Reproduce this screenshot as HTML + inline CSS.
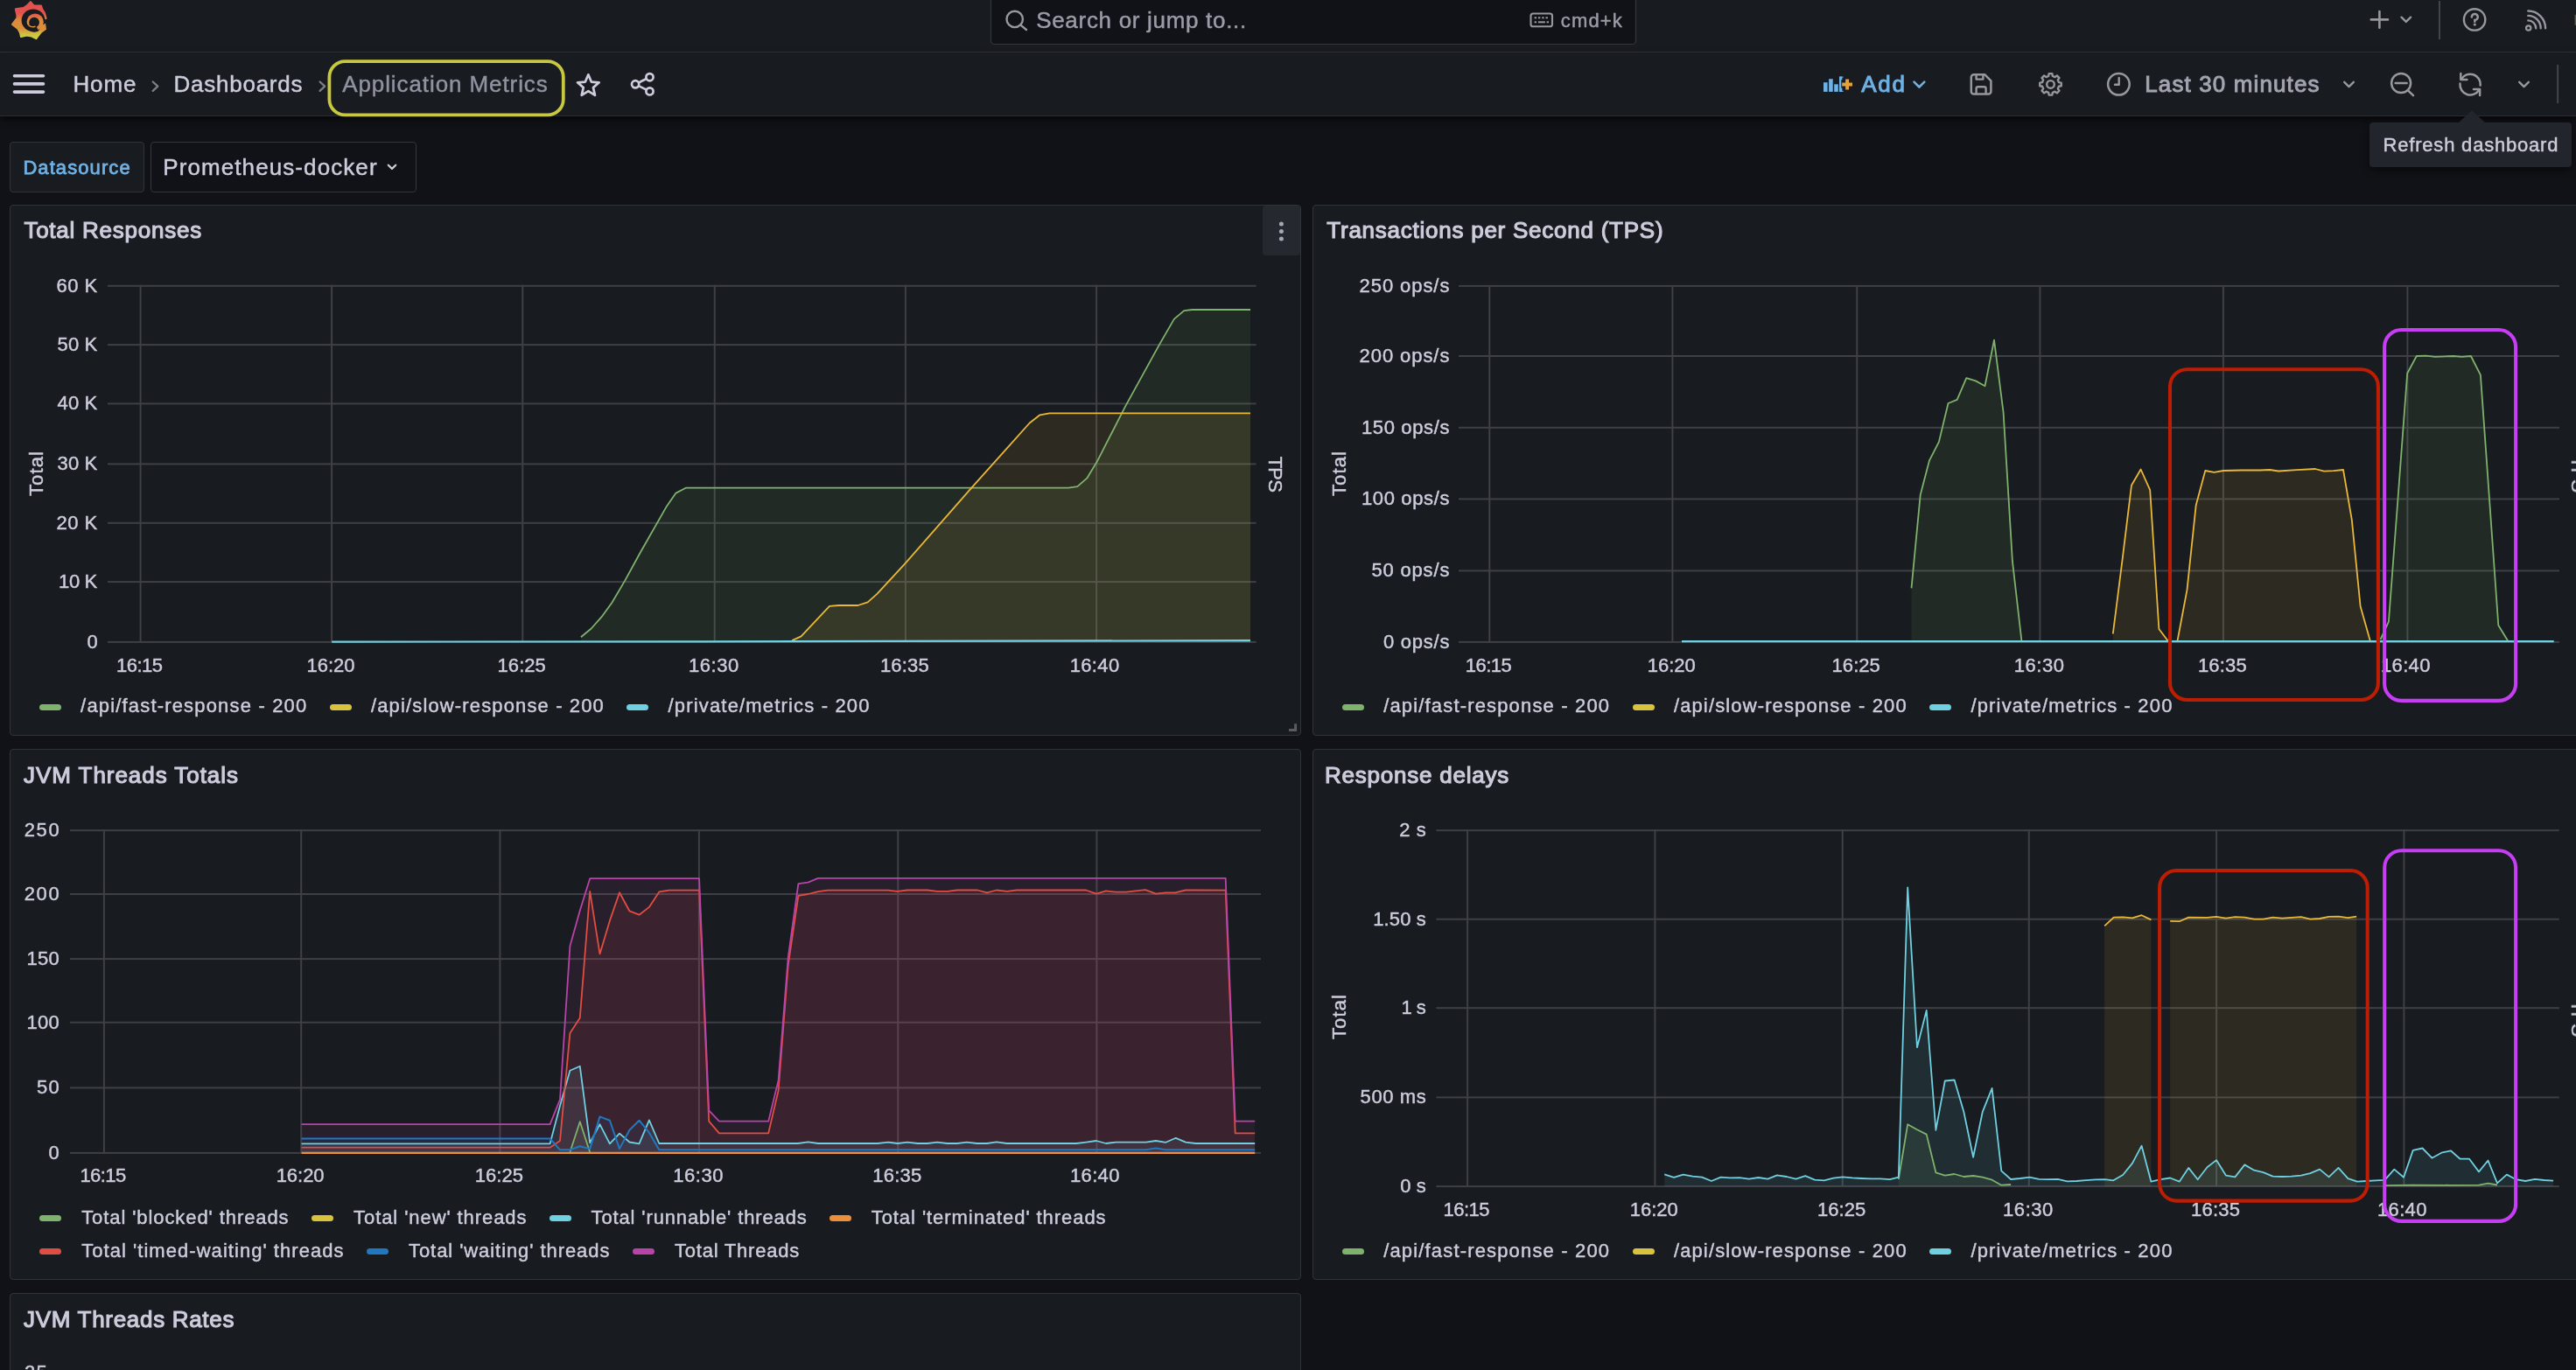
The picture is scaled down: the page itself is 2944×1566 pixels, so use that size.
<!DOCTYPE html>
<html lang="en"><head><meta charset="utf-8"><title>Application Metrics - Dashboards - Grafana</title>
<style>
*{box-sizing:border-box}
html,body{margin:0;padding:0;background:#111217;}
html,body{width:2944px;height:1566px;overflow:hidden}
#root{width:2944px;height:1566px;position:relative;overflow:hidden;font-family:"Liberation Sans", sans-serif;color:#ccccdc;background:#111217}
.t{position:absolute;white-space:pre;line-height:1;font-family:"Liberation Sans", sans-serif}
.abs{position:absolute}
.panel{position:absolute;background:#181b1f;border:1px solid #303338;border-radius:4px}
.sw{position:absolute;width:25px;height:7px;border-radius:3.5px}
svg{position:absolute;overflow:visible}
</style></head>
<body>
<div id="root">
<div class="abs" style="left:0;top:0;width:2944px;height:60px;background:#181b1f;border-bottom:1px solid #303338"></div>
<div class="abs" style="left:0;top:60px;width:2944px;height:73px;background:#181b1f;border-bottom:1px solid #2a2c32;box-shadow:0 4px 7px rgba(0,0,0,.6)"></div>
<svg style="left:0;top:0" width="2944" height="60" viewBox="0 0 2944 60">
<defs><linearGradient id="lg" gradientUnits="userSpaceOnUse" x1="0" y1="1" x2="0" y2="45"><stop offset="0" stop-color="#e2524f"/><stop offset="0.32" stop-color="#e2534e"/><stop offset="0.5" stop-color="#dc8a3c"/><stop offset="0.72" stop-color="#d8903c"/><stop offset="0.88" stop-color="#cfc640"/><stop offset="1" stop-color="#cbd03f"/></linearGradient></defs><path d="M34.9 2.2 L38.8 6.7 L46.9 6.7 L48.2 10.6 L50.9 14.8 L52.4 20.8 L51.0 27.2 L51.9 33.1 L47.0 36.6 L44.0 40.4 L41.3 44.0 L36.3 41.5 L30.4 40.5 L24.1 42.0 L23.0 37.2 L20.6 33.0 L14.1 28.0 L19.3 20.8 L19.7 18.4 L17.9 10.4 L26.8 9.1 L30.9 6.5Z" fill="url(#lg)" stroke="url(#lg)" stroke-width="2.2" stroke-linejoin="round"/><ellipse cx="38.0" cy="23.3" rx="13.4" ry="12.7" fill="#181b1f"/><path d="M50.2 22.2 L54.5 21.9 L54.5 27.2 L50.6 26.8 Z" fill="#181b1f"/><circle cx="40.2" cy="25.0" r="9.6" fill="url(#lg)"/><circle cx="39.1" cy="25.6" r="5.9" fill="#181b1f"/><path d="M39.3 25.4 L44.2 35.5 A11.2 11.2 0 0 1 28.8 29.2 Z" fill="#181b1f"/><path d="M32.2 27.4 C33.2 30.2 36.4 31.6 40.0 30.2" fill="none" stroke="#dc8d3c" stroke-width="1.5" stroke-linecap="round"/><path d="M46.0 29.6 L50.4 27.4 L51.6 32.6 L47.8 35.6 L44.8 33.4 Z" fill="#db8c3c"/>
<rect x="1132.5" y="-6" width="737" height="56.5" rx="4" fill="#111217" stroke="#34363d" stroke-width="1.2"/>
<circle cx="1159.7" cy="21.9" r="9.2" fill="none" stroke="#96979f" stroke-width="2.4"/><path d="M1166.4 28.6 L1173 34" stroke="#96979f" stroke-width="2.4" stroke-linecap="round"/>
<rect x="1749.5" y="15.5" width="24.5" height="14.8" rx="2.6" fill="none" stroke="#96979f" stroke-width="2.1"/>
<rect x="1753.6" y="19.3" width="2.4" height="2" fill="#96979f"/>
<rect x="1757.9" y="19.3" width="2.4" height="2" fill="#96979f"/>
<rect x="1762.2" y="19.3" width="2.4" height="2" fill="#96979f"/>
<rect x="1766.5" y="19.3" width="2.4" height="2" fill="#96979f"/>
<rect x="1753.6" y="24.3" width="2.4" height="2" fill="#96979f"/><rect x="1757.9" y="24.3" width="8" height="2" fill="#96979f"/><rect x="1767.6" y="24.3" width="2.4" height="2" fill="#96979f"/>
<path d="M2709.8 22.4 H2729 M2719.4 13 V31.8" stroke="#96979f" stroke-width="2.6" stroke-linecap="round"/>
<path d="M2744.5 19.7 L2749.8 24.9 L2755.1 19.7" fill="none" stroke="#96979f" stroke-width="2.4" stroke-linecap="round" stroke-linejoin="round"/>
<rect x="2787.0" y="1" width="1.9" height="44" fill="#45474e"/>
<circle cx="2828.1" cy="22.4" r="12.2" fill="none" stroke="#96979f" stroke-width="2.4"/>
<path d="M2824.8 19.4 A3.5 3.5 0 1 1 2828.3 22.9 V24.7" fill="none" stroke="#96979f" stroke-width="2.5" stroke-linecap="round"/><circle cx="2828.3" cy="28.1" r="1.6" fill="#96979f"/>
<circle cx="2889.7" cy="32.0" r="2.7" fill="none" stroke="#96979f" stroke-width="2.2"/>
<path d="M2889.3 23.4 A8.9 8.9 0 0 1 2898.2 32.3" fill="none" stroke="#96979f" stroke-width="2.4" stroke-linecap="round"/>
<path d="M2889.3 17.9 A14.4 14.4 0 0 1 2903.7 32.3" fill="none" stroke="#96979f" stroke-width="2.4" stroke-linecap="round"/>
<path d="M2889.3 12.5 A19.8 19.8 0 0 1 2909.1 32.3" fill="none" stroke="#96979f" stroke-width="2.4" stroke-linecap="round"/>
<rect x="2942.6" y="16.8" width="2" height="12" fill="#5c5c3e"/>
</svg>
<svg style="left:0;top:60px" width="2944" height="80" viewBox="0 60 2944 80">
<path d="M16.5 86.8 H49.5" stroke="#ccccdc" stroke-width="3.6" stroke-linecap="round"/>
<path d="M16.5 95.9 H49.5" stroke="#ccccdc" stroke-width="3.6" stroke-linecap="round"/>
<path d="M16.5 105.1 H49.5" stroke="#ccccdc" stroke-width="3.6" stroke-linecap="round"/>
<path d="M174.7 93.5 L180.3 98.7 L174.7 103.9" fill="none" stroke="#7c7f88" stroke-width="2.3" stroke-linecap="round" stroke-linejoin="round"/>
<path d="M365.6 93.5 L371.2 98.7 L365.6 103.9" fill="none" stroke="#7c7f88" stroke-width="2.3" stroke-linecap="round" stroke-linejoin="round"/>
<rect x="376.4" y="70.1" width="267.4" height="61.3" rx="18" fill="none" stroke="#c8c840" stroke-width="3.8"/>
<path d="M672.35 85.30 L675.82 93.53 L684.71 94.28 L677.96 100.12 L679.99 108.82 L672.35 104.20 L664.71 108.82 L666.74 100.12 L659.99 94.28 L668.88 93.53Z" fill="none" stroke="#ccccdc" stroke-width="2.7" stroke-linejoin="round"/>
<path d="M729.8 94.5 L738.8 90 M729.8 98.1 L738.8 102.6" stroke="#ccccdc" stroke-width="2.6"/>
<circle cx="742.5" cy="88.2" r="4.1" fill="none" stroke="#ccccdc" stroke-width="2.7"/>
<circle cx="726.1" cy="96.3" r="4.1" fill="none" stroke="#ccccdc" stroke-width="2.7"/>
<circle cx="742.5" cy="104.4" r="4.1" fill="none" stroke="#ccccdc" stroke-width="2.7"/>
<rect x="2084.0" y="94.2" width="4.6" height="10.7" fill="#6eb1e4"/>
<rect x="2090.1" y="90.2" width="4.6" height="14.7" fill="#6eb1e4"/>
<rect x="2096.2" y="96.3" width="4.6" height="8.6" fill="#6eb1e4"/>
<rect x="2102.0" y="87.6" width="4.6" height="17.3" fill="#6eb1e4"/>
<rect x="2104.3" y="88.6" width="13.8" height="15.2" fill="#181b1f"/>
<rect x="2102.0" y="87.6" width="3.4" height="3.6" fill="#6eb1e4"/><rect x="2102.0" y="100.6" width="3.4" height="4.3" fill="#6eb1e4"/>
<path d="M2105.2 96.5 H2117 M2111.1 90.6 V102.4" stroke="#e8a13a" stroke-width="3.9"/>
<path d="M2187.5 93.6 L2193.4 99.5 L2199.3 93.6" fill="none" stroke="#6eb1e4" stroke-width="2.6" stroke-linecap="round" stroke-linejoin="round"/>
<path d="M2255.8 85.2 H2268.2 L2275.4 92.4 V104.6 A3 3 0 0 1 2272.4 107.6 H2255.8 A3 3 0 0 1 2252.8 104.6 V88.2 A3 3 0 0 1 2255.8 85.2 Z" fill="none" stroke="#96979f" stroke-width="2.5" stroke-linejoin="round"/><path d="M2258.6 85.6 V90.6 H2266.4 V85.6" fill="none" stroke="#96979f" stroke-width="2.4" stroke-linejoin="round"/><path d="M2258.6 107.4 V101.2 A2 2 0 0 1 2260.6 99.2 H2267.6 A2 2 0 0 1 2269.6 101.2 V107.4" fill="none" stroke="#96979f" stroke-width="2.4" stroke-linejoin="round"/>
<path d="M2341.66 84.14 L2345.34 84.14 L2345.84 86.99 L2348.50 88.09 L2350.87 86.43 L2353.47 89.03 L2351.81 91.40 L2352.91 94.06 L2355.76 94.56 L2355.76 98.24 L2352.91 98.74 L2351.81 101.40 L2353.47 103.77 L2350.87 106.37 L2348.50 104.71 L2345.84 105.81 L2345.34 108.66 L2341.66 108.66 L2341.16 105.81 L2338.50 104.71 L2336.13 106.37 L2333.53 103.77 L2335.19 101.40 L2334.09 98.74 L2331.24 98.24 L2331.24 94.56 L2334.09 94.06 L2335.19 91.40 L2333.53 89.03 L2336.13 86.43 L2338.50 88.09 L2341.16 86.99Z" fill="none" stroke="#96979f" stroke-width="2.4" stroke-linejoin="round"/><circle cx="2343.5" cy="96.4" r="4.3" fill="none" stroke="#96979f" stroke-width="2.4"/>
<circle cx="2421.4" cy="96.3" r="12.3" fill="none" stroke="#96979f" stroke-width="2.5"/><path d="M2421.7 89.0 V96.8 H2417.0" fill="none" stroke="#96979f" stroke-width="2.4" stroke-linecap="round" stroke-linejoin="round"/>
<path d="M2679.2 93.8 L2684.5 99.1 L2689.8 93.8" fill="none" stroke="#96979f" stroke-width="2.4" stroke-linecap="round" stroke-linejoin="round"/>
<circle cx="2744.1" cy="95.0" r="11.0" fill="none" stroke="#96979f" stroke-width="2.5"/><path d="M2737.6 95 H2750.6 M2752 103.4 L2758 109.2" stroke="#96979f" stroke-width="2.5" stroke-linecap="round"/>
<path d="M2813.0 90.4 A11.7 11.7 0 0 1 2834.7 97.6 M2833.3 102.6 A11.7 11.7 0 0 1 2811.5 95.6" fill="none" stroke="#96979f" stroke-width="2.5" stroke-linecap="round"/><path d="M2812.3 84.0 V91.0 H2819.4" fill="none" stroke="#96979f" stroke-width="2.5" stroke-linecap="round" stroke-linejoin="round"/><path d="M2827.0 101.9 H2834.1 V108.9" fill="none" stroke="#96979f" stroke-width="2.5" stroke-linecap="round" stroke-linejoin="round"/>
<path d="M2879.2 93.8 L2884.5 99.1 L2889.8 93.8" fill="none" stroke="#96979f" stroke-width="2.4" stroke-linecap="round" stroke-linejoin="round"/>
<rect x="2922.2" y="74" width="1.9" height="44" fill="#45474e"/>
</svg>
<div class="abs" style="left:11px;top:162px;width:154px;height:58px;background:#181b1f;border:1px solid #303338;border-radius:4px"></div>
<div class="abs" style="left:172px;top:162px;width:304px;height:58px;background:#111217;border:1px solid #34363c;border-radius:4px"></div>
<svg style="left:440px;top:183px" width="16" height="16" viewBox="0 0 16 16"><path d="M3.8 5.8 L8 9.9 L12.2 5.8" fill="none" stroke="#ccccdc" stroke-width="2.3" stroke-linecap="round" stroke-linejoin="round"/></svg>
<div class="panel" style="left:11px;top:234px;width:1476px;height:607px"></div>
<div class="panel" style="left:1500px;top:234px;width:1476px;height:607px"></div>
<div class="panel" style="left:11px;top:856px;width:1476px;height:607px"></div>
<div class="panel" style="left:1500px;top:856px;width:1476px;height:607px"></div>
<div class="panel" style="left:11px;top:1478px;width:1476px;height:606px"></div>
<div class="abs" style="left:1443px;top:235px;width:43px;height:57px;background:#25282e;border-radius:4px"></div>
<div class="sw" style="left:44.9px;top:805.3px;background:#7eb26d"></div><div class="sw" style="left:376.6px;top:805.3px;background:#d9c23c"></div><div class="sw" style="left:716.4px;top:805.3px;background:#6ed0e0"></div>
<div class="sw" style="left:1534.0px;top:805.3px;background:#7eb26d"></div><div class="sw" style="left:1865.6px;top:805.3px;background:#d9c23c"></div><div class="sw" style="left:2205.3px;top:805.3px;background:#6ed0e0"></div>
<div class="sw" style="left:44.8px;top:1389.0px;background:#7eb26d"></div><div class="sw" style="left:356.4px;top:1389.0px;background:#d9c23c"></div><div class="sw" style="left:627.7px;top:1389.0px;background:#6ed0e0"></div><div class="sw" style="left:948.0px;top:1389.0px;background:#ec8f3a"></div>
<div class="sw" style="left:44.8px;top:1427.0px;background:#e24d42"></div><div class="sw" style="left:419.3px;top:1427.0px;background:#1f78c1"></div><div class="sw" style="left:722.6px;top:1427.0px;background:#ba43a9"></div>
<div class="sw" style="left:1534.0px;top:1427.3px;background:#7eb26d"></div><div class="sw" style="left:1865.6px;top:1427.3px;background:#d9c23c"></div><div class="sw" style="left:2205.3px;top:1427.3px;background:#6ed0e0"></div>
<div class="abs" style="left:2708px;top:140px;width:231px;height:51px;background:#22252b;border-radius:4px;box-shadow:0 4px 10px rgba(0,0,0,.5)"></div>
<svg style="left:2809px;top:126px" width="32" height="16" viewBox="0 0 32 16"><path d="M0 15 L16 0 L32 15Z" fill="#22252b"/></svg>
<svg style="left:0;top:0" width="2944" height="1566" viewBox="0 0 2944 1566"><rect x="123.0" y="325.80" width="1312.6" height="2" fill="#3e4045"/><rect x="123.0" y="393.10" width="1312.6" height="2" fill="#3e4045"/><rect x="123.0" y="460.40" width="1312.6" height="2" fill="#3e4045"/><rect x="123.0" y="529.40" width="1312.6" height="2" fill="#3e4045"/><rect x="123.0" y="596.80" width="1312.6" height="2" fill="#3e4045"/><rect x="123.0" y="664.10" width="1312.6" height="2" fill="#3e4045"/><rect x="123.0" y="732.90" width="1312.6" height="2" fill="#3e4045"/><rect x="159.60" y="325.8" width="2" height="409.1" fill="#3e4045"/><rect x="378.10" y="325.8" width="2" height="409.1" fill="#3e4045"/><rect x="596.30" y="325.8" width="2" height="409.1" fill="#3e4045"/><rect x="815.70" y="325.8" width="2" height="409.1" fill="#3e4045"/><rect x="1033.90" y="325.8" width="2" height="409.1" fill="#3e4045"/><rect x="1252.10" y="325.8" width="2" height="409.1" fill="#3e4045"/>



<polygon points="663.9,728.3 675.7,718.5 687.5,705.2 699.3,689.0 714.1,663.9 731.8,631.5 762.1,578.4 772.5,563.6 783.7,557.7 1221.0,557.7 1231.3,556.2 1242.5,546.3 1253.4,528.3 1285.9,464.9 1325.7,392.6 1341.9,364.6 1353.2,355.1 1362.6,354.0 1429.0,354.0 1429.0,733.9 663.9,733.9" fill="#7eb26d" fill-opacity="0.1"/><polygon points="905.2,732.1 915.6,727.4 948.0,692.8 958.4,692.0 980.5,692.0 991.7,688.4 1002.6,678.7 1035.1,643.3 1110.3,557.7 1176.7,483.5 1188.5,474.3 1199.4,472.3 1429.0,472.3 1429.0,733.9 905.2,733.9" fill="#eab839" fill-opacity="0.1"/><polyline points="663.9,728.3 675.7,718.5 687.5,705.2 699.3,689.0 714.1,663.9 731.8,631.5 762.1,578.4 772.5,563.6 783.7,557.7 1221.0,557.7 1231.3,556.2 1242.5,546.3 1253.4,528.3 1285.9,464.9 1325.7,392.6 1341.9,364.6 1353.2,355.1 1362.6,354.0 1429.0,354.0" fill="none" stroke="#7eb26d" stroke-width="1.8" stroke-linejoin="round"/><polyline points="905.2,732.1 915.6,727.4 948.0,692.8 958.4,692.0 980.5,692.0 991.7,688.4 1002.6,678.7 1035.1,643.3 1110.3,557.7 1176.7,483.5 1188.5,474.3 1199.4,472.3 1429.0,472.3" fill="none" stroke="#eab839" stroke-width="1.8" stroke-linejoin="round"/><polyline points="379.2,733.6 800.0,733.3 1429.0,732.2" fill="none" stroke="#6ed0e0" stroke-width="2.2" stroke-linejoin="round"/>
<circle cx="1464.4" cy="256" r="2.5" fill="#a6a7b3"/><circle cx="1464.4" cy="264.6" r="2.5" fill="#a6a7b3"/><circle cx="1464.4" cy="273.1" r="2.5" fill="#a6a7b3"/>
<path d="M1473 834.4 H1480.6 V827.2" fill="none" stroke="#595b60" stroke-width="3"/>
<rect x="1667.0" y="325.90" width="1258.0" height="2" fill="#3e4045"/><rect x="1667.0" y="406.00" width="1258.0" height="2" fill="#3e4045"/><rect x="1667.0" y="487.80" width="1258.0" height="2" fill="#3e4045"/><rect x="1667.0" y="569.40" width="1258.0" height="2" fill="#3e4045"/><rect x="1667.0" y="651.40" width="1258.0" height="2" fill="#3e4045"/><rect x="1667.0" y="732.90" width="1258.0" height="2" fill="#3e4045"/><rect x="1701.30" y="325.9" width="2" height="409.0" fill="#3e4045"/><rect x="1910.40" y="325.9" width="2" height="409.0" fill="#3e4045"/><rect x="2121.30" y="325.9" width="2" height="409.0" fill="#3e4045"/><rect x="2330.40" y="325.9" width="2" height="409.0" fill="#3e4045"/><rect x="2539.90" y="325.9" width="2" height="409.0" fill="#3e4045"/><rect x="2750.40" y="325.9" width="2" height="409.0" fill="#3e4045"/>





<polygon points="2184.5,672.3 2194.7,565.7 2205.0,526.3 2215.9,505.1 2226.5,461.0 2236.7,456.9 2247.3,432.1 2257.9,435.4 2268.5,441.2 2279.0,388.7 2289.6,471.5 2299.9,641.2 2310.4,732.5 2310.4,733.9 2184.5,733.9" fill="#7eb26d" fill-opacity="0.1"/><polygon points="2720.5,731.0 2729.9,710.6 2740.5,569.7 2751.2,426.7 2761.8,407.0 2772.8,406.6 2783.0,407.9 2803.5,407.0 2813.7,407.9 2823.9,407.0 2834.9,428.7 2845.1,571.7 2855.3,714.7 2866.0,732.3 2866.0,733.9 2720.5,733.9" fill="#7eb26d" fill-opacity="0.1"/><polygon points="2414.8,724.5 2425.4,641.2 2436.0,554.7 2446.6,536.5 2457.2,560.2 2467.4,719.0 2477.6,732.5 2477.6,733.9 2414.8,733.9" fill="#eab839" fill-opacity="0.1"/><polygon points="2488.5,732.5 2499.5,674.1 2509.7,577.4 2520.3,538.0 2530.5,539.8 2541.0,538.0 2562.0,537.5 2583.0,537.5 2594.0,537.0 2604.0,538.5 2625.0,537.2 2646.0,536.0 2656.0,538.7 2667.0,538.2 2678.0,537.0 2687.8,594.2 2697.6,693.0 2708.7,732.3 2708.7,733.9 2488.5,733.9" fill="#eab839" fill-opacity="0.1"/><polyline points="2184.5,672.3 2194.7,565.7 2205.0,526.3 2215.9,505.1 2226.5,461.0 2236.7,456.9 2247.3,432.1 2257.9,435.4 2268.5,441.2 2279.0,388.7 2289.6,471.5 2299.9,641.2 2310.4,732.5" fill="none" stroke="#7eb26d" stroke-width="1.8" stroke-linejoin="round"/><polyline points="2720.5,731.0 2729.9,710.6 2740.5,569.7 2751.2,426.7 2761.8,407.0 2772.8,406.6 2783.0,407.9 2803.5,407.0 2813.7,407.9 2823.9,407.0 2834.9,428.7 2845.1,571.7 2855.3,714.7 2866.0,732.3" fill="none" stroke="#7eb26d" stroke-width="1.8" stroke-linejoin="round"/><polyline points="2414.8,724.5 2425.4,641.2 2436.0,554.7 2446.6,536.5 2457.2,560.2 2467.4,719.0 2477.6,732.5" fill="none" stroke="#eab839" stroke-width="1.8" stroke-linejoin="round"/><polyline points="2488.5,732.5 2499.5,674.1 2509.7,577.4 2520.3,538.0 2530.5,539.8 2541.0,538.0 2562.0,537.5 2583.0,537.5 2594.0,537.0 2604.0,538.5 2625.0,537.2 2646.0,536.0 2656.0,538.7 2667.0,538.2 2678.0,537.0 2687.8,594.2 2697.6,693.0 2708.7,732.3" fill="none" stroke="#eab839" stroke-width="1.8" stroke-linejoin="round"/><polyline points="1922.0,733.2 2918.7,733.2" fill="none" stroke="#6ed0e0" stroke-width="2.2" stroke-linejoin="round"/>
<rect x="79.9" y="948.20" width="1361.1" height="2" fill="#3e4045"/><rect x="79.9" y="1021.00" width="1361.1" height="2" fill="#3e4045"/><rect x="79.9" y="1095.10" width="1361.1" height="2" fill="#3e4045"/><rect x="79.9" y="1167.70" width="1361.1" height="2" fill="#3e4045"/><rect x="79.9" y="1242.40" width="1361.1" height="2" fill="#3e4045"/><rect x="79.9" y="1316.90" width="1361.1" height="2" fill="#3e4045"/><rect x="117.90" y="948.2" width="2" height="370.7" fill="#3e4045"/><rect x="343.20" y="948.2" width="2" height="370.7" fill="#3e4045"/><rect x="570.40" y="948.2" width="2" height="370.7" fill="#3e4045"/><rect x="797.90" y="948.2" width="2" height="370.7" fill="#3e4045"/><rect x="1025.30" y="948.2" width="2" height="370.7" fill="#3e4045"/><rect x="1252.40" y="948.2" width="2" height="370.7" fill="#3e4045"/>






<polygon points="651.4,1317.0 662.8,1282.2 674.2,1317.0 674.2,1317.9 651.4,1317.9" fill="#7eb26d" fill-opacity="0.1"/><polygon points="344.6,1307.3 628.6,1307.3 640.0,1264.0 651.4,1223.8 662.8,1218.8 674.2,1306.4 685.5,1285.1 696.9,1307.3 708.0,1295.6 719.4,1305.5 730.5,1307.3 741.9,1280.4 753.3,1307.0 912.0,1307.0 923.5,1305.4 935.0,1307.0 1003.0,1307.0 1014.8,1305.6 1026.0,1307.0 1037.0,1305.6 1048.6,1307.0 1060.0,1307.0 1071.0,1305.6 1082.5,1307.0 1094.0,1307.0 1105.0,1305.6 1116.5,1307.0 1128.0,1307.0 1139.0,1305.4 1150.6,1307.0 1230.0,1307.0 1241.5,1305.6 1252.8,1304.0 1264.0,1307.0 1275.5,1305.6 1309.7,1305.6 1321.0,1304.0 1332.4,1305.8 1343.8,1300.8 1355.0,1305.6 1366.5,1307.0 1434.2,1307.0 1434.2,1317.9 344.6,1317.9" fill="#6ed0e0" fill-opacity="0.1"/><polygon points="344.6,1311.7 628.6,1311.7 640.0,1304.0 651.4,1180.9 662.8,1163.4 674.2,1018.8 685.5,1090.4 696.9,1052.4 708.0,1020.3 719.4,1041.3 730.5,1045.7 741.9,1036.9 753.3,1019.4 764.4,1017.7 799.1,1017.7 810.2,1281.6 821.9,1295.3 878.2,1295.3 889.6,1246.6 900.7,1103.5 912.4,1023.8 923.5,1022.0 934.9,1019.1 946.0,1017.7 1015.0,1017.7 1026.0,1018.9 1037.0,1017.5 1060.0,1017.5 1071.0,1018.8 1083.0,1018.8 1094.0,1017.5 1117.0,1017.5 1128.0,1020.3 1139.0,1017.5 1151.0,1018.9 1162.0,1017.5 1241.0,1017.5 1253.0,1021.6 1264.0,1018.3 1275.0,1019.7 1287.0,1019.7 1309.0,1017.2 1321.0,1021.6 1332.0,1020.3 1343.0,1020.3 1355.0,1017.5 1400.7,1017.6 1411.7,1295.4 1434.2,1295.4 1434.2,1317.9 344.6,1317.9" fill="#e24d42" fill-opacity="0.1"/><polygon points="344.6,1301.5 628.6,1301.5 640.0,1314.3 651.4,1314.3 662.8,1310.2 674.2,1313.1 685.5,1276.4 696.9,1280.7 708.0,1313.1 719.4,1291.8 730.5,1280.7 741.9,1294.7 753.3,1314.3 1309.7,1314.3 1321.0,1312.6 1332.4,1314.3 1434.2,1314.3 1434.2,1317.9 344.6,1317.9" fill="#1f78c1" fill-opacity="0.1"/><polygon points="344.6,1285.1 628.6,1285.1 640.0,1256.8 651.4,1081.6 662.8,1040.7 674.2,1004.2 799.1,1004.2 810.2,1269.3 821.9,1281.6 878.2,1281.6 889.6,1234.9 900.7,1094.7 912.4,1010.1 923.5,1008.6 934.9,1003.9 1400.7,1003.9 1411.7,1281.6 1434.2,1281.6 1434.2,1317.9 344.6,1317.9" fill="#ba43a9" fill-opacity="0.1"/><polyline points="651.4,1317.0 662.8,1282.2 674.2,1317.0" fill="none" stroke="#7eb26d" stroke-width="1.8" stroke-linejoin="round"/><polyline points="344.6,1307.3 628.6,1307.3 640.0,1264.0 651.4,1223.8 662.8,1218.8 674.2,1306.4 685.5,1285.1 696.9,1307.3 708.0,1295.6 719.4,1305.5 730.5,1307.3 741.9,1280.4 753.3,1307.0 912.0,1307.0 923.5,1305.4 935.0,1307.0 1003.0,1307.0 1014.8,1305.6 1026.0,1307.0 1037.0,1305.6 1048.6,1307.0 1060.0,1307.0 1071.0,1305.6 1082.5,1307.0 1094.0,1307.0 1105.0,1305.6 1116.5,1307.0 1128.0,1307.0 1139.0,1305.4 1150.6,1307.0 1230.0,1307.0 1241.5,1305.6 1252.8,1304.0 1264.0,1307.0 1275.5,1305.6 1309.7,1305.6 1321.0,1304.0 1332.4,1305.8 1343.8,1300.8 1355.0,1305.6 1366.5,1307.0 1434.2,1307.0" fill="none" stroke="#6ed0e0" stroke-width="1.8" stroke-linejoin="round"/><polyline points="344.6,1311.7 628.6,1311.7 640.0,1304.0 651.4,1180.9 662.8,1163.4 674.2,1018.8 685.5,1090.4 696.9,1052.4 708.0,1020.3 719.4,1041.3 730.5,1045.7 741.9,1036.9 753.3,1019.4 764.4,1017.7 799.1,1017.7 810.2,1281.6 821.9,1295.3 878.2,1295.3 889.6,1246.6 900.7,1103.5 912.4,1023.8 923.5,1022.0 934.9,1019.1 946.0,1017.7 1015.0,1017.7 1026.0,1018.9 1037.0,1017.5 1060.0,1017.5 1071.0,1018.8 1083.0,1018.8 1094.0,1017.5 1117.0,1017.5 1128.0,1020.3 1139.0,1017.5 1151.0,1018.9 1162.0,1017.5 1241.0,1017.5 1253.0,1021.6 1264.0,1018.3 1275.0,1019.7 1287.0,1019.7 1309.0,1017.2 1321.0,1021.6 1332.0,1020.3 1343.0,1020.3 1355.0,1017.5 1400.7,1017.6 1411.7,1295.4 1434.2,1295.4" fill="none" stroke="#e24d42" stroke-width="1.8" stroke-linejoin="round"/><polyline points="344.6,1301.5 628.6,1301.5 640.0,1314.3 651.4,1314.3 662.8,1310.2 674.2,1313.1 685.5,1276.4 696.9,1280.7 708.0,1313.1 719.4,1291.8 730.5,1280.7 741.9,1294.7 753.3,1314.3 1309.7,1314.3 1321.0,1312.6 1332.4,1314.3 1434.2,1314.3" fill="none" stroke="#1f78c1" stroke-width="2.0" stroke-linejoin="round"/><polyline points="344.6,1285.1 628.6,1285.1 640.0,1256.8 651.4,1081.6 662.8,1040.7 674.2,1004.2 799.1,1004.2 810.2,1269.3 821.9,1281.6 878.2,1281.6 889.6,1234.9 900.7,1094.7 912.4,1010.1 923.5,1008.6 934.9,1003.9 1400.7,1003.9 1411.7,1281.6 1434.2,1281.6" fill="none" stroke="#ba43a9" stroke-width="1.8" stroke-linejoin="round"/><polyline points="344.6,1317.9 1434.2,1317.9" fill="none" stroke="#ec8f3a" stroke-width="2.2" stroke-linejoin="round"/>
<rect x="1641.4" y="948.20" width="1283.4" height="2" fill="#3e4045"/><rect x="1641.4" y="1049.70" width="1283.4" height="2" fill="#3e4045"/><rect x="1641.4" y="1151.20" width="1283.4" height="2" fill="#3e4045"/><rect x="1641.4" y="1253.40" width="1283.4" height="2" fill="#3e4045"/><rect x="1641.4" y="1355.10" width="1283.4" height="2" fill="#3e4045"/><rect x="1676.10" y="948.2" width="2" height="408.9" fill="#3e4045"/><rect x="1890.40" y="948.2" width="2" height="408.9" fill="#3e4045"/><rect x="2104.70" y="948.2" width="2" height="408.9" fill="#3e4045"/><rect x="2317.80" y="948.2" width="2" height="408.9" fill="#3e4045"/><rect x="2532.10" y="948.2" width="2" height="408.9" fill="#3e4045"/><rect x="2746.40" y="948.2" width="2" height="408.9" fill="#3e4045"/>





<polygon points="2169.8,1348.0 2180.2,1285.2 2191.0,1291.2 2201.7,1296.6 2212.4,1340.3 2222.8,1343.6 2233.6,1342.0 2244.3,1345.0 2255.1,1344.0 2265.8,1345.6 2276.6,1348.7 2287.3,1354.7 2298.1,1354.0 2298.1,1355.9 2169.8,1355.9" fill="#7eb26d" fill-opacity="0.1"/><polygon points="2725.4,1355.2 2757.0,1354.6 2800.0,1354.8 2833.0,1354.6 2843.5,1352.7 2854.0,1354.5 2854.0,1355.9 2725.4,1355.9" fill="#7eb26d" fill-opacity="0.1"/><polygon points="2405.2,1058.4 2415.7,1048.6 2426.3,1048.4 2437.0,1049.4 2447.6,1046.2 2458.4,1051.4 2458.4,1355.9 2405.2,1355.9" fill="#eab839" fill-opacity="0.1"/><polygon points="2480.2,1052.8 2490.7,1053.2 2501.2,1048.6 2522.5,1048.9 2533.0,1047.9 2543.9,1049.6 2554.4,1048.2 2565.3,1048.6 2576.2,1050.6 2586.7,1050.6 2597.5,1048.6 2608.2,1049.6 2629.8,1048.2 2640.3,1050.6 2651.1,1050.0 2661.6,1047.9 2672.5,1047.6 2683.4,1049.2 2693.2,1047.6 2693.2,1355.9 2480.2,1355.9" fill="#eab839" fill-opacity="0.1"/><polygon points="1902.2,1342.3 1913.0,1345.8 1923.7,1342.6 1934.4,1344.6 1945.2,1345.6 1955.9,1350.0 1966.6,1345.6 1977.4,1346.4 1988.0,1346.2 1998.8,1347.6 2009.6,1346.0 2020.3,1347.6 2031.0,1343.4 2041.8,1345.0 2052.5,1347.6 2063.2,1344.2 2074.0,1348.6 2084.7,1349.4 2095.4,1346.6 2106.0,1345.4 2117.0,1346.4 2127.6,1347.0 2138.4,1347.4 2149.0,1347.4 2159.8,1348.2 2169.8,1345.6 2180.2,1014.5 2191.0,1197.2 2201.7,1154.9 2212.4,1291.9 2222.8,1235.5 2233.6,1234.5 2244.3,1270.8 2255.1,1322.8 2265.8,1270.8 2276.6,1243.9 2287.3,1338.3 2298.1,1348.0 2308.8,1347.0 2319.6,1345.6 2330.3,1347.8 2341.0,1348.2 2351.8,1347.8 2362.5,1350.4 2373.2,1350.0 2384.0,1349.2 2394.7,1348.4 2405.4,1348.2 2415.3,1349.3 2426.2,1343.0 2437.0,1329.6 2447.6,1309.7 2458.4,1350.7 2469.3,1348.2 2480.2,1346.5 2490.7,1350.7 2501.2,1334.9 2511.7,1348.2 2522.5,1334.2 2533.0,1326.1 2543.9,1343.6 2554.4,1345.4 2565.3,1331.4 2576.2,1337.7 2586.7,1340.1 2597.5,1344.7 2608.2,1345.0 2618.9,1344.7 2629.8,1343.6 2640.3,1341.2 2651.1,1336.6 2661.6,1345.4 2672.5,1334.9 2683.4,1347.1 2693.9,1350.7 2704.4,1350.0 2715.0,1349.4 2725.4,1348.9 2736.3,1336.6 2747.1,1345.7 2757.7,1314.9 2768.5,1312.5 2779.4,1323.7 2790.2,1317.7 2800.8,1315.3 2811.6,1324.7 2822.1,1324.7 2833.0,1339.4 2843.5,1326.5 2854.0,1352.4 2864.9,1342.6 2875.4,1348.2 2886.2,1350.0 2897.1,1347.8 2907.6,1349.0 2918.1,1349.6 2918.1,1355.9 1902.2,1355.9" fill="#6ed0e0" fill-opacity="0.1"/><polyline points="2169.8,1348.0 2180.2,1285.2 2191.0,1291.2 2201.7,1296.6 2212.4,1340.3 2222.8,1343.6 2233.6,1342.0 2244.3,1345.0 2255.1,1344.0 2265.8,1345.6 2276.6,1348.7 2287.3,1354.7 2298.1,1354.0" fill="none" stroke="#7eb26d" stroke-width="1.8" stroke-linejoin="round"/><polyline points="2725.4,1355.2 2757.0,1354.6 2800.0,1354.8 2833.0,1354.6 2843.5,1352.7 2854.0,1354.5" fill="none" stroke="#7eb26d" stroke-width="1.8" stroke-linejoin="round"/><polyline points="2405.2,1058.4 2415.7,1048.6 2426.3,1048.4 2437.0,1049.4 2447.6,1046.2 2458.4,1051.4" fill="none" stroke="#eab839" stroke-width="1.8" stroke-linejoin="round"/><polyline points="2480.2,1052.8 2490.7,1053.2 2501.2,1048.6 2522.5,1048.9 2533.0,1047.9 2543.9,1049.6 2554.4,1048.2 2565.3,1048.6 2576.2,1050.6 2586.7,1050.6 2597.5,1048.6 2608.2,1049.6 2629.8,1048.2 2640.3,1050.6 2651.1,1050.0 2661.6,1047.9 2672.5,1047.6 2683.4,1049.2 2693.2,1047.6" fill="none" stroke="#eab839" stroke-width="1.8" stroke-linejoin="round"/><polyline points="1902.2,1342.3 1913.0,1345.8 1923.7,1342.6 1934.4,1344.6 1945.2,1345.6 1955.9,1350.0 1966.6,1345.6 1977.4,1346.4 1988.0,1346.2 1998.8,1347.6 2009.6,1346.0 2020.3,1347.6 2031.0,1343.4 2041.8,1345.0 2052.5,1347.6 2063.2,1344.2 2074.0,1348.6 2084.7,1349.4 2095.4,1346.6 2106.0,1345.4 2117.0,1346.4 2127.6,1347.0 2138.4,1347.4 2149.0,1347.4 2159.8,1348.2 2169.8,1345.6 2180.2,1014.5 2191.0,1197.2 2201.7,1154.9 2212.4,1291.9 2222.8,1235.5 2233.6,1234.5 2244.3,1270.8 2255.1,1322.8 2265.8,1270.8 2276.6,1243.9 2287.3,1338.3 2298.1,1348.0 2308.8,1347.0 2319.6,1345.6 2330.3,1347.8 2341.0,1348.2 2351.8,1347.8 2362.5,1350.4 2373.2,1350.0 2384.0,1349.2 2394.7,1348.4 2405.4,1348.2 2415.3,1349.3 2426.2,1343.0 2437.0,1329.6 2447.6,1309.7 2458.4,1350.7 2469.3,1348.2 2480.2,1346.5 2490.7,1350.7 2501.2,1334.9 2511.7,1348.2 2522.5,1334.2 2533.0,1326.1 2543.9,1343.6 2554.4,1345.4 2565.3,1331.4 2576.2,1337.7 2586.7,1340.1 2597.5,1344.7 2608.2,1345.0 2618.9,1344.7 2629.8,1343.6 2640.3,1341.2 2651.1,1336.6 2661.6,1345.4 2672.5,1334.9 2683.4,1347.1 2693.9,1350.7 2704.4,1350.0 2715.0,1349.4 2725.4,1348.9 2736.3,1336.6 2747.1,1345.7 2757.7,1314.9 2768.5,1312.5 2779.4,1323.7 2790.2,1317.7 2800.8,1315.3 2811.6,1324.7 2822.1,1324.7 2833.0,1339.4 2843.5,1326.5 2854.0,1352.4 2864.9,1342.6 2875.4,1348.2 2886.2,1350.0 2897.1,1347.8 2907.6,1349.0 2918.1,1349.6" fill="none" stroke="#6ed0e0" stroke-width="1.8" stroke-linejoin="round"/></svg>
<div id="txt" style="position:absolute;left:0;top:0;width:2944px;height:1566px;will-change:transform"><span class="t" style="font-size:26px;color:#9b9ca8;letter-spacing:0.692px;-webkit-text-stroke:0.45px #9b9ca8;left:1184.20px;top:9.79px">Search or jump to...</span>
<span class="t" style="font-size:22px;color:#9b9ca8;letter-spacing:1.148px;-webkit-text-stroke:0.45px #9b9ca8;left:1783.80px;top:12.98px">cmd+k</span>
<span class="t" style="font-size:26px;color:#ccccdc;letter-spacing:0.835px;-webkit-text-stroke:0.45px #ccccdc;left:83.50px;top:83.09px">Home</span>
<span class="t" style="font-size:26px;color:#ccccdc;letter-spacing:0.756px;-webkit-text-stroke:0.45px #ccccdc;left:198.50px;top:83.09px">Dashboards</span>
<span class="t" style="font-size:26px;color:#9192a0;letter-spacing:0.911px;-webkit-text-stroke:0.45px #9192a0;left:391.20px;top:83.09px">Application Metrics</span>
<span class="t" style="font-size:26px;color:#6eb1e4;letter-spacing:1.699px;-webkit-text-stroke:0.95px #6eb1e4;left:2127.30px;top:82.89px">Add</span>
<span class="t" style="font-size:26px;color:#a3a4b1;letter-spacing:1.118px;-webkit-text-stroke:0.95px #a3a4b1;left:2451.30px;top:82.89px">Last 30 minutes</span>
<span class="t" style="font-size:22px;color:#6eb1e4;letter-spacing:1.081px;-webkit-text-stroke:0.80px #6eb1e4;left:26.40px;top:181.18px">Datasource</span>
<span class="t" style="font-size:26px;color:#ccccdc;letter-spacing:1.086px;-webkit-text-stroke:0.45px #ccccdc;left:186.30px;top:178.39px">Prometheus-docker</span>
<span class="t" style="font-size:26px;color:#ccccdc;letter-spacing:0.756px;-webkit-text-stroke:1.10px #ccccdc;left:27.40px;top:250.49px">Total Responses</span>
<span class="t" style="font-size:22px;color:#ccccdc;letter-spacing:0.472px;-webkit-text-stroke:0.45px #ccccdc;left:64.60px;top:315.88px">60 K</span>
<span class="t" style="font-size:22px;color:#ccccdc;letter-spacing:0.139px;-webkit-text-stroke:0.45px #ccccdc;left:65.60px;top:383.18px">50 K</span>
<span class="t" style="font-size:22px;color:#ccccdc;letter-spacing:0.139px;-webkit-text-stroke:0.45px #ccccdc;left:65.60px;top:450.48px">40 K</span>
<span class="t" style="font-size:22px;color:#ccccdc;letter-spacing:0.139px;-webkit-text-stroke:0.45px #ccccdc;left:65.60px;top:519.48px">30 K</span>
<span class="t" style="font-size:22px;color:#ccccdc;letter-spacing:0.472px;-webkit-text-stroke:0.45px #ccccdc;left:64.60px;top:586.88px">20 K</span>
<span class="t" style="font-size:22px;color:#ccccdc;letter-spacing:-0.328px;-webkit-text-stroke:0.45px #ccccdc;left:67.00px;top:654.18px">10 K</span>
<span class="t" style="font-size:22px;color:#ccccdc;-webkit-text-stroke:0.45px #ccccdc;left:99.60px;top:722.98px">0</span>
<span class="t" style="font-size:22px;color:#ccccdc;letter-spacing:-0.555px;-webkit-text-stroke:0.45px #ccccdc;left:133.10px;top:749.78px">16:15</span>
<span class="t" style="font-size:22px;color:#ccccdc;letter-spacing:-0.030px;-webkit-text-stroke:0.45px #ccccdc;left:350.55px;top:749.78px">16:20</span>
<span class="t" style="font-size:22px;color:#ccccdc;letter-spacing:0.045px;-webkit-text-stroke:0.45px #ccccdc;left:568.60px;top:749.78px">16:25</span>
<span class="t" style="font-size:22px;color:#ccccdc;letter-spacing:0.545px;-webkit-text-stroke:0.45px #ccccdc;left:787.00px;top:749.78px">16:30</span>
<span class="t" style="font-size:22px;color:#ccccdc;letter-spacing:0.195px;-webkit-text-stroke:0.45px #ccccdc;left:1005.90px;top:749.78px">16:35</span>
<span class="t" style="font-size:22px;color:#ccccdc;letter-spacing:0.345px;-webkit-text-stroke:0.45px #ccccdc;left:1222.70px;top:749.78px">16:40</span>
<span class="t" style="font-size:22px;color:#ccccdc;letter-spacing:1.104px;-webkit-text-stroke:0.45px #ccccdc;left:41.6px;top:541.5px;transform:translate(-50%,-50%) rotate(-90deg) translate(1.00px,0)">Total</span>
<span class="t" style="font-size:22px;color:#ccccdc;letter-spacing:-0.806px;-webkit-text-stroke:0.45px #ccccdc;left:1457.4px;top:541.8px;transform:translate(-50%,-50%) rotate(90deg) translate(-0.07px,0)">TPS</span>
<span class="t" style="font-size:22px;color:#ccccdc;letter-spacing:1.174px;-webkit-text-stroke:0.45px #ccccdc;left:92.10px;top:796.28px">/api/fast-response - 200</span>
<span class="t" style="font-size:22px;color:#ccccdc;letter-spacing:1.137px;-webkit-text-stroke:0.45px #ccccdc;left:424.00px;top:796.28px">/api/slow-response - 200</span>
<span class="t" style="font-size:22px;color:#ccccdc;letter-spacing:1.164px;-webkit-text-stroke:0.45px #ccccdc;left:763.60px;top:796.28px">/private/metrics - 200</span>
<span class="t" style="font-size:26px;color:#ccccdc;letter-spacing:0.753px;-webkit-text-stroke:1.10px #ccccdc;left:1516.30px;top:250.49px">Transactions per Second (TPS)</span>
<span class="t" style="font-size:22px;color:#ccccdc;letter-spacing:0.925px;-webkit-text-stroke:0.45px #ccccdc;left:1553.60px;top:315.98px">250 ops/s</span>
<span class="t" style="font-size:22px;color:#ccccdc;letter-spacing:0.925px;-webkit-text-stroke:0.45px #ccccdc;left:1553.60px;top:396.08px">200 ops/s</span>
<span class="t" style="font-size:22px;color:#ccccdc;letter-spacing:0.625px;-webkit-text-stroke:0.45px #ccccdc;left:1556.00px;top:477.88px">150 ops/s</span>
<span class="t" style="font-size:22px;color:#ccccdc;letter-spacing:0.625px;-webkit-text-stroke:0.45px #ccccdc;left:1556.00px;top:559.48px">100 ops/s</span>
<span class="t" style="font-size:22px;color:#ccccdc;letter-spacing:0.833px;-webkit-text-stroke:0.45px #ccccdc;left:1567.40px;top:641.48px">50 ops/s</span>
<span class="t" style="font-size:22px;color:#ccccdc;letter-spacing:0.762px;-webkit-text-stroke:0.45px #ccccdc;left:1580.90px;top:722.98px">0 ops/s</span>
<span class="t" style="font-size:22px;color:#ccccdc;letter-spacing:-0.555px;-webkit-text-stroke:0.45px #ccccdc;left:1674.80px;top:749.78px">16:15</span>
<span class="t" style="font-size:22px;color:#ccccdc;letter-spacing:-0.030px;-webkit-text-stroke:0.45px #ccccdc;left:1882.85px;top:749.78px">16:20</span>
<span class="t" style="font-size:22px;color:#ccccdc;letter-spacing:0.045px;-webkit-text-stroke:0.45px #ccccdc;left:2093.60px;top:749.78px">16:25</span>
<span class="t" style="font-size:22px;color:#ccccdc;letter-spacing:0.545px;-webkit-text-stroke:0.45px #ccccdc;left:2301.70px;top:749.78px">16:30</span>
<span class="t" style="font-size:22px;color:#ccccdc;letter-spacing:0.195px;-webkit-text-stroke:0.45px #ccccdc;left:2511.90px;top:749.78px">16:35</span>
<span class="t" style="font-size:22px;color:#ccccdc;letter-spacing:0.345px;-webkit-text-stroke:0.45px #ccccdc;left:2721.00px;top:749.78px">16:40</span>
<span class="t" style="font-size:22px;color:#ccccdc;letter-spacing:1.104px;-webkit-text-stroke:0.45px #ccccdc;left:1530.6px;top:541.5px;transform:translate(-50%,-50%) rotate(-90deg) translate(1.00px,0)">Total</span>
<span class="t" style="font-size:22px;color:#ccccdc;letter-spacing:-0.806px;-webkit-text-stroke:0.45px #ccccdc;left:2945.5px;top:541.8px;transform:translate(-50%,-50%) rotate(90deg) translate(-0.07px,0)">TPS</span>
<span class="t" style="font-size:22px;color:#ccccdc;letter-spacing:1.161px;-webkit-text-stroke:0.45px #ccccdc;left:1581.20px;top:796.28px">/api/fast-response - 200</span>
<span class="t" style="font-size:22px;color:#ccccdc;letter-spacing:1.133px;-webkit-text-stroke:0.45px #ccccdc;left:1912.90px;top:796.28px">/api/slow-response - 200</span>
<span class="t" style="font-size:22px;color:#ccccdc;letter-spacing:1.173px;-webkit-text-stroke:0.45px #ccccdc;left:2252.40px;top:796.28px">/private/metrics - 200</span>
<span class="t" style="font-size:26px;color:#ccccdc;letter-spacing:0.944px;-webkit-text-stroke:1.10px #ccccdc;left:27.10px;top:872.59px">JVM Threads Totals</span>
<span class="t" style="font-size:22px;color:#ccccdc;letter-spacing:1.565px;-webkit-text-stroke:0.45px #ccccdc;left:27.80px;top:938.28px">250</span>
<span class="t" style="font-size:22px;color:#ccccdc;letter-spacing:1.565px;-webkit-text-stroke:0.45px #ccccdc;left:27.80px;top:1011.08px">200</span>
<span class="t" style="font-size:22px;color:#ccccdc;letter-spacing:0.265px;-webkit-text-stroke:0.45px #ccccdc;left:30.40px;top:1085.18px">150</span>
<span class="t" style="font-size:22px;color:#ccccdc;letter-spacing:0.265px;-webkit-text-stroke:0.45px #ccccdc;left:30.40px;top:1157.78px">100</span>
<span class="t" style="font-size:22px;color:#ccccdc;letter-spacing:1.165px;-webkit-text-stroke:0.45px #ccccdc;left:42.00px;top:1232.48px">50</span>
<span class="t" style="font-size:22px;color:#ccccdc;-webkit-text-stroke:0.45px #ccccdc;left:55.40px;top:1306.98px">0</span>
<span class="t" style="font-size:22px;color:#ccccdc;letter-spacing:-0.555px;-webkit-text-stroke:0.45px #ccccdc;left:91.40px;top:1333.38px">16:15</span>
<span class="t" style="font-size:22px;color:#ccccdc;letter-spacing:-0.030px;-webkit-text-stroke:0.45px #ccccdc;left:315.65px;top:1333.38px">16:20</span>
<span class="t" style="font-size:22px;color:#ccccdc;letter-spacing:0.045px;-webkit-text-stroke:0.45px #ccccdc;left:542.70px;top:1333.38px">16:25</span>
<span class="t" style="font-size:22px;color:#ccccdc;letter-spacing:0.545px;-webkit-text-stroke:0.45px #ccccdc;left:769.20px;top:1333.38px">16:30</span>
<span class="t" style="font-size:22px;color:#ccccdc;letter-spacing:0.195px;-webkit-text-stroke:0.45px #ccccdc;left:997.30px;top:1333.38px">16:35</span>
<span class="t" style="font-size:22px;color:#ccccdc;letter-spacing:0.345px;-webkit-text-stroke:0.45px #ccccdc;left:1223.00px;top:1333.38px">16:40</span>
<span class="t" style="font-size:22px;color:#ccccdc;letter-spacing:0.913px;-webkit-text-stroke:0.45px #ccccdc;left:93.20px;top:1380.78px">Total 'blocked' threads</span>
<span class="t" style="font-size:22px;color:#ccccdc;letter-spacing:0.920px;-webkit-text-stroke:0.45px #ccccdc;left:404.10px;top:1380.78px">Total 'new' threads</span>
<span class="t" style="font-size:22px;color:#ccccdc;letter-spacing:0.878px;-webkit-text-stroke:0.45px #ccccdc;left:675.50px;top:1380.78px">Total 'runnable' threads</span>
<span class="t" style="font-size:22px;color:#ccccdc;letter-spacing:0.939px;-webkit-text-stroke:0.45px #ccccdc;left:995.70px;top:1380.78px">Total 'terminated' threads</span>
<span class="t" style="font-size:22px;color:#ccccdc;letter-spacing:1.044px;-webkit-text-stroke:0.45px #ccccdc;left:93.20px;top:1418.58px">Total 'timed-waiting' threads</span>
<span class="t" style="font-size:22px;color:#ccccdc;letter-spacing:0.929px;-webkit-text-stroke:0.45px #ccccdc;left:467.00px;top:1418.58px">Total 'waiting' threads</span>
<span class="t" style="font-size:22px;color:#ccccdc;letter-spacing:0.776px;-webkit-text-stroke:0.45px #ccccdc;left:771.00px;top:1418.58px">Total Threads</span>
<span class="t" style="font-size:26px;color:#ccccdc;letter-spacing:0.775px;-webkit-text-stroke:1.10px #ccccdc;left:1514.00px;top:872.59px">Response delays</span>
<span class="t" style="font-size:22px;color:#ccccdc;letter-spacing:0.576px;-webkit-text-stroke:0.45px #ccccdc;left:1599.30px;top:938.28px">2 s</span>
<span class="t" style="font-size:22px;color:#ccccdc;letter-spacing:0.134px;-webkit-text-stroke:0.45px #ccccdc;left:1569.20px;top:1039.78px">1.50 s</span>
<span class="t" style="font-size:22px;color:#ccccdc;letter-spacing:-0.574px;-webkit-text-stroke:0.45px #ccccdc;left:1601.60px;top:1141.28px">1 s</span>
<span class="t" style="font-size:22px;color:#ccccdc;letter-spacing:0.611px;-webkit-text-stroke:0.45px #ccccdc;left:1554.60px;top:1243.48px">500 ms</span>
<span class="t" style="font-size:22px;color:#ccccdc;letter-spacing:0.076px;-webkit-text-stroke:0.45px #ccccdc;left:1600.30px;top:1345.18px">0 s</span>
<span class="t" style="font-size:22px;color:#ccccdc;letter-spacing:-0.555px;-webkit-text-stroke:0.45px #ccccdc;left:1649.60px;top:1371.78px">16:15</span>
<span class="t" style="font-size:22px;color:#ccccdc;letter-spacing:-0.030px;-webkit-text-stroke:0.45px #ccccdc;left:1862.85px;top:1371.78px">16:20</span>
<span class="t" style="font-size:22px;color:#ccccdc;letter-spacing:0.045px;-webkit-text-stroke:0.45px #ccccdc;left:2077.00px;top:1371.78px">16:25</span>
<span class="t" style="font-size:22px;color:#ccccdc;letter-spacing:0.545px;-webkit-text-stroke:0.45px #ccccdc;left:2289.10px;top:1371.78px">16:30</span>
<span class="t" style="font-size:22px;color:#ccccdc;letter-spacing:0.195px;-webkit-text-stroke:0.45px #ccccdc;left:2504.10px;top:1371.78px">16:35</span>
<span class="t" style="font-size:22px;color:#ccccdc;letter-spacing:0.345px;-webkit-text-stroke:0.45px #ccccdc;left:2717.00px;top:1371.78px">16:40</span>
<span class="t" style="font-size:22px;color:#ccccdc;letter-spacing:1.104px;-webkit-text-stroke:0.45px #ccccdc;left:1530.6px;top:1163.3px;transform:translate(-50%,-50%) rotate(-90deg) translate(1.00px,0)">Total</span>
<span class="t" style="font-size:22px;color:#ccccdc;letter-spacing:-0.806px;-webkit-text-stroke:0.45px #ccccdc;left:2945.5px;top:1163.6px;transform:translate(-50%,-50%) rotate(90deg) translate(-0.07px,0)">TPS</span>
<span class="t" style="font-size:22px;color:#ccccdc;letter-spacing:1.161px;-webkit-text-stroke:0.45px #ccccdc;left:1581.20px;top:1419.18px">/api/fast-response - 200</span>
<span class="t" style="font-size:22px;color:#ccccdc;letter-spacing:1.133px;-webkit-text-stroke:0.45px #ccccdc;left:1912.90px;top:1419.18px">/api/slow-response - 200</span>
<span class="t" style="font-size:22px;color:#ccccdc;letter-spacing:1.173px;-webkit-text-stroke:0.45px #ccccdc;left:2252.40px;top:1419.18px">/private/metrics - 200</span>
<span class="t" style="font-size:26px;color:#ccccdc;letter-spacing:0.691px;-webkit-text-stroke:1.10px #ccccdc;left:27.10px;top:1494.59px">JVM Threads Rates</span>
<span class="t" style="font-size:22px;color:#ccccdc;letter-spacing:1.365px;-webkit-text-stroke:0.45px #ccccdc;left:28.00px;top:1558.38px">25</span>
<span class="t" style="font-size:22px;color:#ccccdc;letter-spacing:0.795px;-webkit-text-stroke:0.45px #ccccdc;left:2723.60px;top:154.88px">Refresh dashboard</span></div>
<svg style="left:0;top:0" width="2944" height="1566" viewBox="0 0 2944 1566"><rect x="2480.0" y="422.2" width="237.9" height="377.8" rx="19.5" fill="none" stroke="#bd1d02" stroke-width="4.1"/><rect x="2725.1" y="377.0" width="150.0" height="423.9" rx="19.5" fill="none" stroke="#c63df4" stroke-width="4.1"/><rect x="2468.1" y="995.0" width="237.6" height="377.6" rx="19.5" fill="none" stroke="#bd1d02" stroke-width="4.1"/><rect x="2725.2" y="972.2" width="149.9" height="423.7" rx="19.5" fill="none" stroke="#c63df4" stroke-width="4.1"/></svg>
</div>
</body></html>
